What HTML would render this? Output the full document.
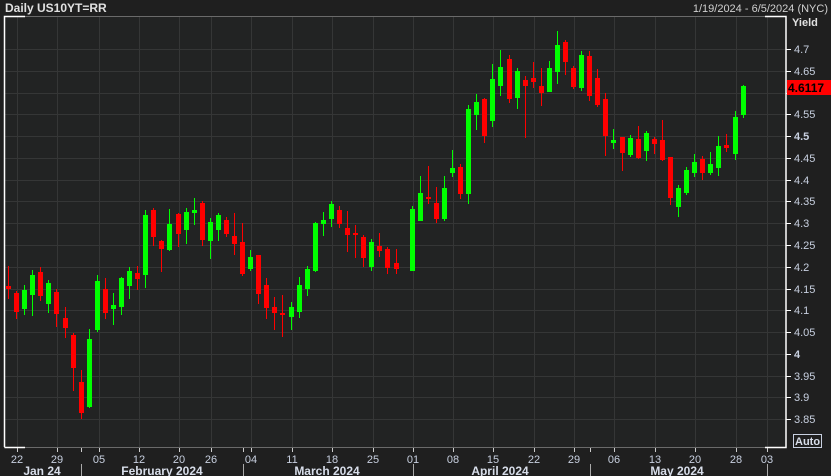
<!DOCTYPE html>
<html><head><meta charset="utf-8"><style>
html,body{margin:0;padding:0;background:#1f1f1f;width:831px;height:476px;overflow:hidden}
svg{display:block}
text{font-family:"Liberation Sans",sans-serif}
</style></head><body>
<svg id="s" width="831" height="476" xmlns="http://www.w3.org/2000/svg">
<rect width="831" height="476" fill="#1f1f1f"/>
<rect x="4" y="16" width="782" height="431" fill="#222323"/>
<g id="grid" stroke="#353636" stroke-width="1"></g>
<g id="c"></g>
<line x1="4" y1="16.5" x2="786" y2="16.5" stroke="#6a6a6a"/>
<line x1="4" y1="447.5" x2="786" y2="447.5" stroke="#6a6a6a"/>
<g stroke="#fff" stroke-width="1.5" fill="none">
<path d="M4.5 447 V16.5 H25"/><path d="M765 16.5 H786 V447.5 H765"/><path d="M4.5 447.5 H25"/>
</g>
<text x="5" y="12" fill="#e0e0e0" font-size="12" font-weight="bold">Daily US10YT=RR</text>
<text x="828" y="12" fill="#d0d0d0" font-size="11" text-anchor="end">1/19/2024 - 6/5/2024 (NYC)</text>
<text x="792" y="26" fill="#e0e0e0" font-size="11" font-weight="bold">Yield</text>
<g id="ya"></g>
<rect x="787" y="80" width="44" height="15" fill="#ff0000"/>
<text x="788" y="92" fill="#000" font-size="12" font-weight="bold">4.6117</text>
<rect x="793.5" y="434.5" width="28" height="13" fill="none" stroke="#c8d0e0"/>
<text x="795" y="445" fill="#d8deea" font-size="11" font-weight="bold">Auto</text>
<g id="xa"></g>
</svg>
<script>
var NS="http://www.w3.org/2000/svg";
function el(p,t,a,tx){var e=document.createElementNS(NS,t);for(var k in a)e.setAttribute(k,a[k]);if(tx)e.textContent=tx;document.getElementById(p).appendChild(e);}
var yl=[["4.7",49],["4.65",71],["4.6",93],["4.55",114],["4.5",136],["4.45",158],["4.4",180],["4.35",201],["4.3",223],["4.25",245],["4.2",267],["4.15",289],["4.1",310],["4.05",332],["4",354],["3.95",376],["3.9",397],["3.85",419]];
yl.forEach(function(l){
 el("grid","line",{x1:4,x2:786,y1:l[1]+.5,y2:l[1]+.5});
 el("ya","line",{x1:786,x2:791,y1:l[1]+.5,y2:l[1]+.5,stroke:"#fff"});
 if(l[0]!="4.6")el("ya","text",{x:794,y:l[1]+4,fill:"#c8d0e0","font-size":11,"font-weight":(l[0]=="4.5"||l[0]=="4")?"bold":"normal"},l[0]);
});
var xl=[["22",17],["29",57],["05",99],["12",139],["20",179],["26",211],["04",251],["11",292],["18",332],["25",373],["01",413],["08",453],["15",493],["22",534],["29",574],["06",614],["13",655],["20",695],["28",736],["03",767]];
xl.forEach(function(l){
 if(l[1]<786)el("grid","line",{x1:l[1]+.5,x2:l[1]+.5,y1:16,y2:447});
 el("xa","line",{x1:l[1]+.5,x2:l[1]+.5,y1:448,y2:452,stroke:"#ccc"});
 el("xa","text",{x:l[1],y:463,fill:"#c8d0e0","font-size":11,"text-anchor":"middle"},l[0]);
});
[81,243,413,590,767].forEach(function(x){el("xa","line",{x1:x+.5,x2:x+.5,y1:464,y2:476,stroke:"#aaa"});el("xa","line",{x1:x+.5,x2:x+.5,y1:448,y2:452,stroke:"#ccc"});});
[["Jan 24",42],["February 2024",162],["March 2024",327],["April 2024",500],["May 2024",677]].forEach(function(m){
 el("xa","text",{x:m[1],y:475,fill:"#d8deea","font-size":12,"font-weight":"bold","text-anchor":"middle"},m[0]);});
var C=[
[8,286,289,266,299,0],[16,293,312,291,319,0],[24,290,309,285,315,1],[32,275,295,270,316,1],[40,272,296,267,301,0],[48,283,304,280,313,1],[56,292,314,289,327,0],[65,318,328,307,338,0],[73,335,368,333,391,0],[81,382,413,370,419,0],[89,339,407,329,408,1],[97,281,330,275,332,1],[105,289,313,278,319,0],[113,305,309,293,325,1],[121,278,307,277,315,1],[129,271,286,267,299,1],[137,273,279,266,290,0],[145,215,275,210,288,1],[153,210,237,208,246,0],[161,241,249,240,272,0],[169,224,250,209,251,1],[178,214,234,213,247,0],[186,212,230,208,244,1],[194,210,213,198,225,1],[202,203,240,201,246,0],
[210,222,241,218,259,1],[218,215,230,213,241,1],[226,220,234,217,237,0],[234,236,244,213,255,0],[242,242,274,223,276,0],[250,257,269,250,271,1],[258,255,294,255,304,0],[266,285,308,278,319,0],[274,307,313,297,330,0],[282,313,315,295,337,0],[291,307,317,302,330,1],[299,285,312,277,318,1],[307,269,289,266,296,1],[315,223,271,222,272,1],[323,220,224,212,236,1],[331,204,219,201,227,1],[339,210,224,206,228,0],[347,228,235,211,252,0],[355,233,235,225,258,0],[363,237,258,235,267,0],[371,242,267,239,271,1],[379,246,251,233,257,0],[387,249,268,247,274,0],[396,263,269,249,274,0],
[412,209,271,206,271,1],[420,193,221,176,221,1],[428,197,199,166,204,0],[436,203,219,187,223,0],[444,188,219,176,221,1],[452,168,173,150,177,1],[460,167,194,164,199,0],[468,109,194,105,204,1],[476,102,115,94,130,1],[484,99,136,98,143,0],[492,79,121,64,127,1],[500,67,86,50,96,1],[509,59,99,55,103,0],[517,71,98,68,109,1],[525,80,86,76,138,0],[533,78,82,62,88,0],[541,86,93,68,106,0],[549,68,92,61,92,1],[557,45,72,31,84,1],[565,42,62,40,75,0],[573,68,87,66,89,0],[581,55,88,51,91,1],[589,56,96,51,101,0],[597,78,105,69,107,0],[605,99,136,93,156,0],
[613,140,143,129,149,1],[622,137,153,137,171,0],[630,138,155,135,157,1],[638,139,158,126,159,0],[646,133,151,131,161,1],[654,139,144,137,154,0],[662,140,160,120,161,0],[670,157,198,157,205,0],[678,188,207,185,217,1],[686,170,193,167,195,1],[694,162,173,154,177,1],[702,159,173,156,180,0],[710,164,173,152,175,1],[718,146,168,136,176,1],[726,145,148,134,152,0],[735,117,154,111,160,1],[743,86,115,85,118,1]];
C.forEach(function(c){var col=c[5]?"#00ff00":"#ff0000";
 el("c","rect",{x:c[0],y:c[3],width:1,height:c[4]-c[3],fill:col});
 el("c","rect",{x:c[0]-2,y:c[1],width:5,height:Math.max(2,c[2]-c[1]),fill:col});});
</script>
</body></html>
